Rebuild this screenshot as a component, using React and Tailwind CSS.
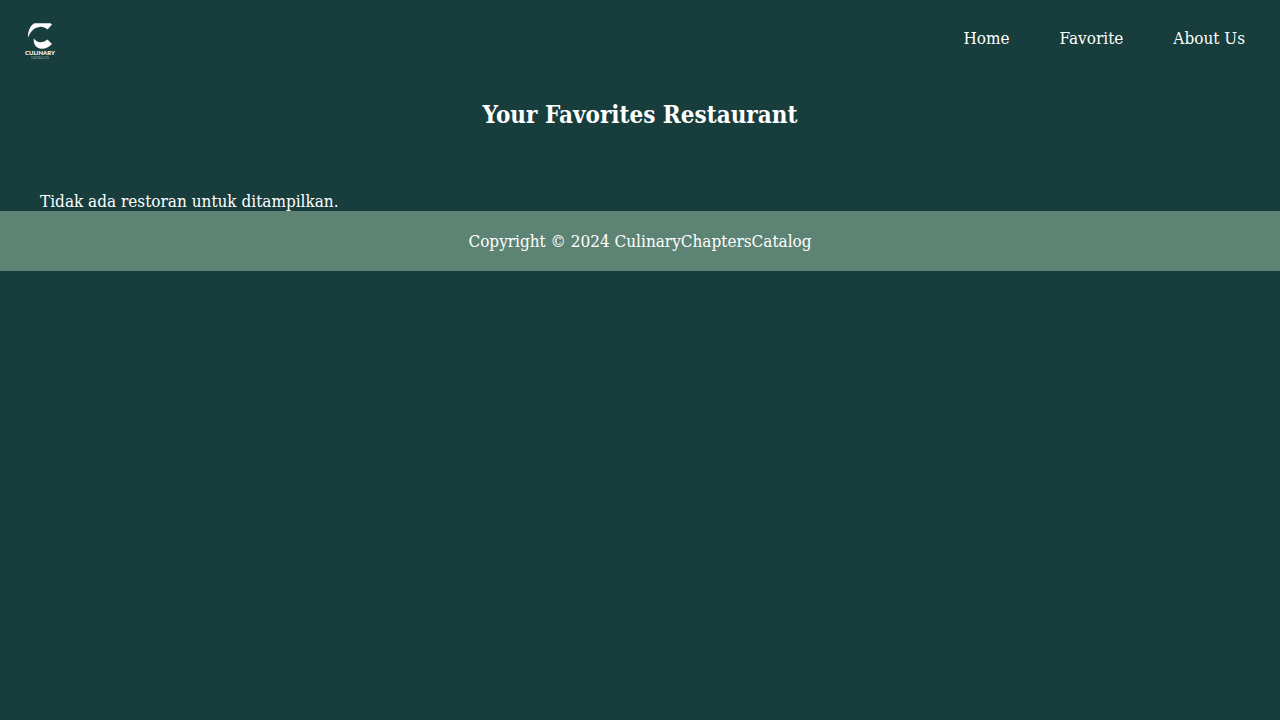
const navLinks = ["Home", "Favorite", "About Us"];

function Logo() {
  return (
    <svg viewBox="0 0 40 40" className="size-10" role="img" aria-label="Culinary Catalog">
      <path
        fill="#fff"
        d="M8 18C7.600 9 12 3.500 15 3.200H30.500L32 4.500L27.500 9.500C25 7.300 22.500 6.500 19.500 6.900C14 7.600 10 11.500 8 18Z"
      />
      <path
        fill="#fff"
        d="M13.800 18.200C15 20.500 17.500 22.200 20.500 22.200C23.300 22.200 25.500 21 27.500 19.500L32 24C29 27.300 25.500 28.800 21.500 28.700C16.500 28.300 13 24.500 13.800 18.200Z"
      />
      <text x="20" y="35" textAnchor="middle" fill="#fff" className="font-['Lato',sans-serif] text-[6px] font-black">
        CULINARY
      </text>
      <text x="20" y="39" textAnchor="middle" fill="#8fa5a3" className="font-['Lato',sans-serif] text-[4px]">
        CATALOG
      </text>
    </svg>
  );
}

export default function App() {
  return (
    <div className="min-h-screen bg-[#183d3d] font-['DejaVu_Serif_Condensed','DejaVu_Serif',serif] text-[17px] leading-5 text-white">
      <header className="flex items-center justify-between px-5 py-5">
        <a href="#home" className="block">
          <Logo />
        </a>
        <nav aria-label="Main" className="pb-1">
          <ul className="flex gap-[50px] pr-[15px]">
            {navLinks.map((label) => (
              <li key={label}>
                <a href="#home">{label}</a>
              </li>
            ))}
          </ul>
        </nav>
      </header>
      <main className="px-10">
        <h1 className="pt-5 text-center text-2xl leading-[30px] font-bold">Your Favorites Restaurant</h1>
        <p className="pt-[61px]">Tidak ada restoran untuk ditampilkan.</p>
      </main>
      <footer className="bg-[#5c8374] p-5 text-center">
        <p>Copyright © 2024 CulinaryChaptersCatalog</p>
      </footer>
    </div>
  );
}
